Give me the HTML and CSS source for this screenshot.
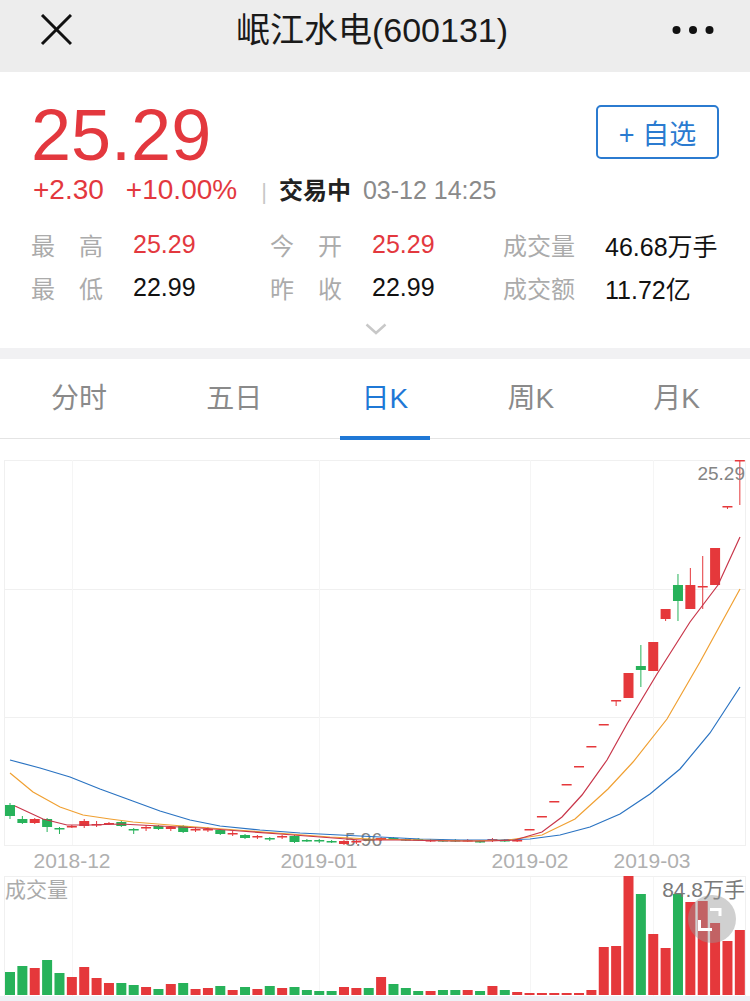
FILE: index.html
```html
<!DOCTYPE html>
<html lang="zh-CN">
<head>
    <meta charset="UTF-8">
    <meta name="viewport" content="width=device-width, initial-scale=1.0">
    <title>岷江水电(600131)</title>
    <link rel="stylesheet" href="styles.css">
</head>
<body>
    <header class="topbar">
        <div class="close">
            <svg width="32" height="32" viewBox="0 0 32 32"><path d="M2 1 L31 30 M31 1 L2 30" stroke="#111" stroke-width="3" fill="none"/></svg>
        </div>
        <h1>岷江水电(600131)</h1>
        <div class="more">
            <svg width="42" height="10" viewBox="0 0 42 10"><circle cx="4.5" cy="5" r="4"/><circle cx="21" cy="5" r="4"/><circle cx="37.5" cy="5" r="4"/></svg>
        </div>
    </header>

    <section class="quote">
        <div class="quote-head">
            <div>
                <div class="price">25.29</div>
                <div class="change">
                    <span class="up">+2.30</span>
                    <span class="up pct">+10.00%</span>
                    <span class="sep">|</span>
                    <span class="status">交易中</span>
                    <span class="time">03-12 14:25</span>
                </div>
            </div>
            <button class="watch">+ 自选</button>
        </div>

        <div class="stats">
            <div class="stat"><span class="label"><i>最</i><i>高</i></span><span class="value up">25.29</span></div>
            <div class="stat"><span class="label"><i>今</i><i>开</i></span><span class="value up">25.29</span></div>
            <div class="stat"><span class="label">成交量</span><span class="value">46.68万手</span></div>
            <div class="stat"><span class="label"><i>最</i><i>低</i></span><span class="value">22.99</span></div>
            <div class="stat"><span class="label"><i>昨</i><i>收</i></span><span class="value">22.99</span></div>
            <div class="stat"><span class="label">成交额</span><span class="value">11.72亿</span></div>
        </div>

        <div class="expand">
            <svg width="22" height="12" viewBox="0 0 22 12"><path d="M1.5 1.5 L11 10 L20.5 1.5" stroke="#c8c8c8" stroke-width="2.5" fill="none"/></svg>
        </div>
    </section>

    <div class="gap"></div>

    <nav class="tabs">
        <span class="tab">分时</span>
        <span class="tab">五日</span>
        <span class="tab active">日K</span>
        <span class="tab">周K</span>
        <span class="tab">月K</span>
    </nav>

    <svg class="chart" id="chart" width="750" height="564" viewBox="0 437 750 564">
        <g class="grid">
            <path d="M4 458.5 H746 M4 587.5 H746 M4 715.5 H746 M4 843.5 H746 M4.5 458 V844 M745.5 458 V844"/>
            <path d="M4 874.5 H746 M4.5 874 V994 M745.5 874 V994"/>
            <path class="soft" d="M72.5 458 V843 M319.5 458 V843 M530.5 458 V843 M653.5 458 V843 M72.5 875 V994 M319.5 875 V994 M530.5 875 V994 M653.5 875 V994"/>
        </g>
        <text class="axis" x="72" y="866" text-anchor="middle">2018-12</text>
        <text class="axis" x="319" y="866" text-anchor="middle">2019-01</text>
        <text class="axis" x="530" y="866" text-anchor="middle">2019-02</text>
        <text class="axis" x="652" y="866" text-anchor="middle">2019-03</text>
        <text class="mark" x="345" y="844">5.96</text>
        <g id="candles"></g>
        <polyline class="ma ma20" points="10,758 40,766 70,775 100,787 130,798 160,809 190,818 220,824 260,828 300,831 340,833 380,835 420,837 460,838 500,838 530,837 560,833 590,825 620,812 650,792 680,767 710,731 740,685"/>
        <polyline class="ma ma10" points="10,771 33,790 60,805 83,813 110,817 133,820 170,823 210,826 250,829 290,832 330,835 370,837 420,838 470,839 508,838 542,833 575,817 608,787 633,760 667,717 700,660 740,587"/>
        <polyline class="ma ma5" points="15,804 43,817 67,823 90,823 120,822 160,824 200,826 240,829 280,832 320,835 360,838 400,838 450,839 490,839 515,838 542,830 562,815 582,793 607,758 627,722 657,672 690,620 718,583 740,535"/>
        <text class="mark" x="745" y="478" text-anchor="end">25.29</text>
        <text class="vol-title" x="5" y="895">成交量</text>
        <g id="volume"></g>
        <text class="vol-max" x="745" y="895" text-anchor="end">84.8万手</text>
        <circle cx="712" cy="917" r="24" fill="rgba(150,150,150,0.45)"/>
        <path d="M710 907.5 H720 V914 M699.5 918 V927.5 H712" stroke="#fff" stroke-width="3" fill="none"/>
        <rect x="0" y="994" width="750" height="7" fill="#eef1f6"/>
    </svg>

    <script>
        const candles = [
            [803,814,801,817,'g'],[817,821,814,822,'g'],[817,821,816,822,'r'],[817,825,816,830,'g'],
            [826,827,825,832,'g'],[824,825,823,826,'r'],[819,824,817,826,'r'],[822,823,819,825,'r'],
            [821,822,820,823,'r'],[820,824,819,825,'g'],[827,828,826,832,'g'],[825,826,823,829,'r'],
            [824,827,823,828,'g'],[825,827,824,829,'r'],[824,830,823,831,'g'],[827,828,825,830,'r'],
            [827,828,825,830,'r'],[828,832,827,833,'g'],[831,832,829,834,'r'],[833,836,832,837,'g'],
            [834,835,833,837,'r'],[836,837,835,839,'g'],[834,835,833,837,'r'],[834,840,833,841,'g'],
            [838,839,837,840,'g'],[838,839,837,841,'g'],[839,840,838,841,'g'],[839,842,838,843,'r'],
            [839,840,838,842,'r'],[837,838,836,839,'g'],[836,838,835,839,'r'],[836,837,835,838,'g'],
            [837,838,836,839,'g'],[837,838,836,839,'g'],[838,839,837,840,'r'],[838,839,837,840,'g'],
            [838,839,837,840,'g'],[838,839,837,840,'r'],[839,840,838,841,'g'],[837,839,836,840,'r'],
            [838,839,837,840,'g'],[838,839,837,840,'r'],[827,827,827,827,'r'],[814,814,814,814,'r'],
            [799,799,799,799,'r'],[782,782,782,782,'r'],[764,764,764,764,'r'],[744,744,744,744,'r'],
            [722,722,722,722,'r'],[698,698,698,704,'r'],[671,696,671,696,'r'],[664,668,643,685,'g'],
            [640,669,640,669,'r'],[607,617,607,619,'r'],[583,599,572,619,'g'],[583,607,566,607,'r'],
            [584,584,554,607,'r'],[546,583,546,583,'r'],[504,504,504,507,'r'],[458,458,458,503,'r']
        ];
        const volumes = [
            [23,'g'],[29,'g'],[27,'r'],[35,'g'],[22,'g'],[18,'r'],[28,'r'],[17,'r'],[12,'r'],[12,'g'],
            [10,'g'],[8,'r'],[6,'g'],[11,'r'],[12,'g'],[6,'r'],[7,'r'],[9,'g'],[5,'r'],[8,'g'],
            [6,'r'],[9,'g'],[7,'r'],[8,'g'],[5,'g'],[4,'g'],[4,'g'],[8,'r'],[7,'r'],[7,'g'],
            [18,'r'],[11,'g'],[7,'g'],[4,'g'],[4,'r'],[5,'g'],[5,'g'],[5,'r'],[4,'g'],[9,'r'],
            [5,'g'],[3,'r'],[2,'r'],[2,'r'],[2,'r'],[2,'r'],[2,'r'],[5,'r'],[48,'r'],[49,'r'],
            [119,'r'],[101,'g'],[61,'r'],[47,'r'],[101,'g'],[93,'r'],[94,'r'],[72,'r'],[54,'r'],[65,'r']
        ];
        const colors = { r: '#e5383b', g: '#27b25a' };
        const step = 12.37;

        document.getElementById('candles').innerHTML = candles.map((c, i) => {
            const [top, bottom, high, low, col] = c;
            const cx = 10 + i * step;
            const h = Math.max(bottom - top, 1.5);
            return `<line x1="${cx}" x2="${cx}" y1="${high}" y2="${low}" stroke="${colors[col]}" stroke-width="1"/>
                <rect x="${cx - 5}" y="${top}" width="10" height="${h}" fill="${colors[col]}"/>`;
        }).join('');

        document.getElementById('volume').innerHTML = volumes.map((v, i) => {
            const x = 5 + i * step;
            return `<rect x="${x}" y="${993 - v[0]}" width="10" height="${v[0]}" fill="${colors[v[1]]}"/>`;
        }).join('');
    </script>
</body>
</html>
```

FILE: styles.css
```css
* {
    box-sizing: border-box;
}

body {
    margin: 0;
    width: 750px;
    background-color: #fff;
    color: #111;
    font-family: "Liberation Sans", "Noto Sans CJK SC", sans-serif;
}

.topbar {
    height: 72px;
    background-color: #ededed;
    display: flex;
    justify-content: space-between;
    align-items: flex-start;
    padding: 0 36px 0 40px;
}

.topbar .close,
.topbar .more {
    height: 60px;
    display: flex;
    align-items: center;
}

.topbar .more svg {
    fill: #111;
}

.topbar h1 {
    margin: 0;
    font-size: 34px;
    font-weight: normal;
    line-height: 60px;
    color: #1a1a1a;
}

.quote {
    padding: 25px 31px 0 31px;
}

.quote-head {
    display: flex;
    justify-content: space-between;
    align-items: flex-start;
}

.price {
    font-size: 72px;
    line-height: 76px;
    color: #e3383e;
}

.change {
    display: flex;
    align-items: baseline;
    font-size: 28px;
    line-height: 34px;
    padding-left: 2px;
}

.up {
    color: #e3383e;
}

.change .pct {
    margin-left: 22px;
}

.change .sep {
    margin-left: 24px;
    font-size: 22px;
    color: #c8c8c8;
}

.change .status {
    margin-left: 12px;
    font-size: 24px;
    font-weight: bold;
    color: #222;
}

.change .time {
    margin-left: 12px;
    font-size: 25px;
    color: #8a8a8a;
}

.watch {
    margin-top: 8px;
    width: 123px;
    height: 54px;
    border: 2px solid #2b7bd0;
    border-radius: 5px;
    background-color: #fff;
    color: #2b7bd0;
    font-family: inherit;
    font-size: 27px;
    padding: 0;
}

.stats {
    margin-top: 14px;
    display: grid;
    grid-template-columns: 239px 233px 1fr;
    grid-auto-rows: 43px;
}

.stat {
    display: flex;
    align-items: center;
    font-size: 25px;
}

.stat .label {
    width: 72px;
    margin-right: 30px;
    display: flex;
    justify-content: space-between;
    font-size: 24px;
    color: #ababab;
}

.stat .label i {
    font-style: normal;
}

.stat .value {
    white-space: nowrap;
}

.expand {
    height: 39px;
    display: flex;
    justify-content: center;
    align-items: center;
    padding-left: 2px;
}

.gap {
    height: 11px;
    background-color: #f1f1f3;
}

.tabs {
    height: 80px;
    display: flex;
    justify-content: space-between;
    align-items: center;
    padding: 0 50px 0 51px;
    border-bottom: 1px solid #e4e4e4;
}

.tab {
    position: relative;
    font-size: 28px;
    line-height: 80px;
    color: #8a8a8a;
}

.tab.active {
    color: #1f78d6;
}

.tab.active::after {
    content: "";
    position: absolute;
    left: 50%;
    bottom: -1px;
    width: 90px;
    height: 4px;
    margin-left: -45px;
    background-color: #1f78d6;
}

.chart {
    display: block;
}

.grid path {
    stroke: #f0f0f0;
    stroke-width: 1;
    fill: none;
}

.grid path.soft {
    stroke: #f5f5f5;
}

.axis {
    font-size: 21px;
    fill: #b0b0b0;
}

.mark {
    font-size: 19px;
    fill: #858585;
}

.vol-title {
    font-size: 21px;
    fill: #ababab;
}

.vol-max {
    font-size: 21px;
    fill: #7a7a7a;
}

.ma {
    fill: none;
    stroke-width: 1.2;
}

.ma5 {
    stroke: #c8364a;
}

.ma10 {
    stroke: #f0a032;
}

.ma20 {
    stroke: #2a73c2;
}
```
